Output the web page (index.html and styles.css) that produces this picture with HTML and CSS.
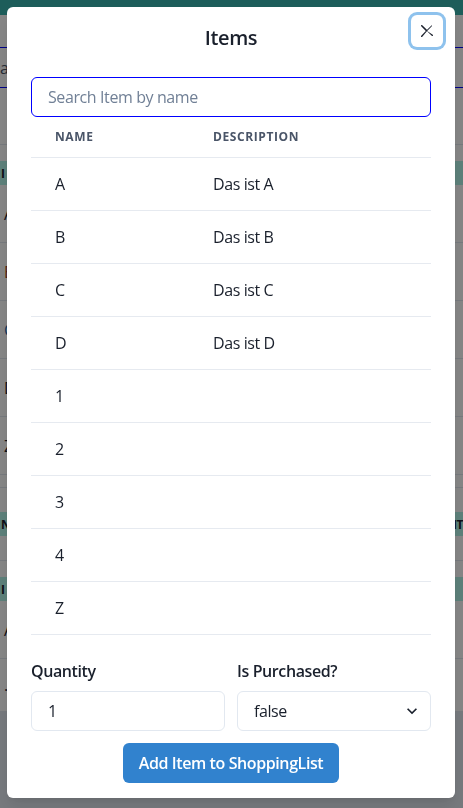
FILE: index.html
```html
<!DOCTYPE html>
<html lang="en">
<head>
<meta charset="utf-8">
<title>Items</title>
<link rel="stylesheet" href="styles.css">
</head>
<body>
<div class="page">
  <div class="bg-header"></div>
  <div class="bg-search"><span>ai</span><span>ch</span></div>
  <div class="bg-gap"></div>
  <div class="bg-band"><span>I</span><span></span></div>
  <div class="bg-row"><span>A</span></div>
  <div class="bg-row"><span class="brown">B</span></div>
  <div class="bg-row"><span class="blue">C</span></div>
  <div class="bg-row"><span>D</span></div>
  <div class="bg-row"><span>Z</span></div>
  <div class="bg-gap2"></div>
  <div class="bg-band bg-band2"><span>N</span><span>TIT</span></div>
  <div class="bg-gap3"></div>
  <div class="bg-band bg-band3"><span>I</span><span></span></div>
  <div class="bg-row"><span>A</span></div>
  <div class="bg-row bg-row-short"><span>.</span></div>
  <div class="bg-footer"></div>
</div>
<div class="overlay"></div>
<div class="modal-wrap">
  <section class="modal">
    <header class="modal-header">Items</header>
    <button class="close" aria-label="Close">
      <svg viewBox="0 0 24 24" width="12" height="12" aria-hidden="true"><path fill="currentColor" d="M.439,21.44a1.5,1.5,0,0,0,2.122,2.121L11.823,12.3a.25.25,0,0,1,.354,0l9.262,9.263a1.5,1.5,0,1,0,2.122-2.121L12.3,12.177a.25.25,0,0,1,0-.354l9.263-9.262A1.5,1.5,0,0,0,21.439.44L12.177,9.7a.25.25,0,0,1-.354,0L2.561.44A1.5,1.5,0,0,0,.439,2.561L9.7,11.823a.25.25,0,0,1,0,.354Z"/></svg>
    </button>
    <div class="modal-body">
      <input class="search" type="text" placeholder="Search Item by name">
      <table class="items">
        <thead>
          <tr><th class="col-name">Name</th><th>Description</th></tr>
        </thead>
        <tbody>
          <tr><td>A</td><td>Das ist A</td></tr>
          <tr><td>B</td><td>Das ist B</td></tr>
          <tr><td>C</td><td>Das ist C</td></tr>
          <tr><td>D</td><td>Das ist D</td></tr>
          <tr><td>1</td><td></td></tr>
          <tr><td>2</td><td></td></tr>
          <tr><td>3</td><td></td></tr>
          <tr><td>4</td><td></td></tr>
          <tr><td>Z</td><td></td></tr>
        </tbody>
      </table>
      <div class="form-row">
        <div class="field">
          <label class="label" for="qty">Quantity</label>
          <input id="qty" class="control" type="text" value="1">
        </div>
        <div class="field">
          <label class="label" for="purchased">Is Purchased?</label>
          <div class="select-wrap">
            <select id="purchased" class="control select"><option>false</option><option>true</option></select>
            <svg class="chev" viewBox="0 0 24 24" width="20" height="20" aria-hidden="true"><path fill="currentColor" d="M16.59 8.59L12 13.17 7.41 8.59 6 10l6 6 6-6z"/></svg>
          </div>
        </div>
      </div>
      <div class="actions">
        <button class="primary">Add Item to ShoppingList</button>
      </div>
    </div>
  </section>
</div>
</body>
</html>
```
FILE: styles.css
```css
* { box-sizing: border-box; }
html, body { margin: 0; padding: 0; }
body {
  font-family: "Open Sans", "Noto Sans", "Liberation Sans", sans-serif;
  letter-spacing: -0.025em;
  color: #1A202C;
  background: #ffffff;
  width: 463px;
  height: 808px;
  overflow: hidden;
}

/* background page (under overlay) */
.page { width: 463px; height: 808px; display: flex; flex-direction: column; }
.bg-header { height: 15px; background: #38B2AC; flex: none; }
.bg-search {
  margin-top: 32px; height: 41px; flex: none;
  border-top: 1px solid #0000ff; border-bottom: 1px solid #0000ff;
  display: flex; justify-content: space-between; align-items: center;
  font-size: 16px; color: #4A5568; padding: 0 10px 0 0;
}
.bg-gap { height: 57px; border-bottom: 1px solid #E2E8F0; flex: none; }
.bg-band {
  margin-top: 16px; height: 24px; background: #B2F5EA; flex: none;
  display: flex; justify-content: space-between; align-items: center;
  font-size: 12px; font-weight: 700; color: #1A202C; padding: 0 0 0 1px;
}
.bg-row {
  height: 58px; border-bottom: 1px solid #E2E8F0; flex: none;
  display: flex; align-items: center; padding-left: 4px; font-size: 16px;
}
.bg-row-short { height: 53px; }
.brown { color: #9C4221; }
.blue { color: #2B6CB0; }
.bg-gap2 { height: 13px; border-bottom: 1px solid #E2E8F0; flex: none; }
.bg-band2 { margin-top: 24px; }
.bg-gap3 { height: 25px; border-bottom: 1px solid #E2E8F0; flex: none; }
.bg-band3 { margin-top: 16px; }
.bg-footer { flex: 1; background: #E2E8F0; }

.overlay { position: fixed; inset: 0; background: rgba(0, 0, 0, 0.48); }

/* modal */
.modal-wrap {
  position: fixed; inset: 0;
  display: flex; justify-content: flex-start; align-items: flex-start;
  padding: 7px 0 0 7px;
}
.modal {
  position: relative;
  width: 448px;
  background: #ffffff;
  border-radius: 6px;
  box-shadow: 0 10px 15px -3px rgba(0,0,0,0.1), 0 4px 6px -2px rgba(0,0,0,0.05);
}
.modal-header {
  padding: 16px 24px;
  font-size: 20px;
  line-height: 30px;
  font-weight: 600;
  text-align: center;
}
.close {
  position: absolute; top: 8px; right: 12px;
  width: 32px; height: 32px;
  border: 0; border-radius: 6px; background: transparent;
  display: flex; align-items: center; justify-content: center;
  color: #1A202C; padding: 0;
  box-shadow: 0 0 0 3px rgba(66, 153, 225, 0.6);
}
.modal-body { padding: 8px 24px 15px; }

.search {
  display: block; width: 100%; height: 40px;
  border: 1px solid #0000ff; border-radius: 6px;
  padding: 0 16px; font: inherit; font-size: 16px; color: #1A202C;
  letter-spacing: -0.025em;
  outline: none; background: #fff;
}
.search::placeholder { color: #718096; opacity: 1; }

.items { width: 100%; border-collapse: collapse; }
.items th {
  text-align: left; font-size: 12px; font-weight: 700; line-height: 16px;
  letter-spacing: 0.05em; text-transform: uppercase; color: #4A5568;
  padding: 12px 24px; border-bottom: 1px solid #E6EAF0;
}
.items th.col-name { width: 158px; }
.items td {
  padding: 16px 24px; font-size: 16px; line-height: 20px;
  border-bottom: 1px solid #E6EAF0; height: 53px;
}

.form-row { display: grid; grid-template-columns: 1fr 1fr; gap: 12px; margin-top: 24px; }
.label { display: block; font-size: 16px; line-height: 24px; font-weight: 600; margin-bottom: 8px; }
.control {
  display: block; width: 100%; height: 40px;
  border: 1px solid #E2E8F0; border-radius: 6px;
  padding: 0 16px; font: inherit; font-size: 16px; color: #1A202C;
  letter-spacing: -0.025em;
  background: #fff; outline: none;
}
.select-wrap { position: relative; }
.select { appearance: none; -webkit-appearance: none; padding-right: 32px; }
.chev {
  position: absolute; right: 9px; top: 10px; color: #1A202C; pointer-events: none;
}

.actions { display: flex; justify-content: center; margin-top: 12px; }
.primary {
  height: 40px; padding: 0 16px; border: 0; border-radius: 6px;
  background: #3182CE; color: #fff;
  font: inherit; font-size: 16px; font-weight: 600;
  letter-spacing: -0.025em;
}
```
